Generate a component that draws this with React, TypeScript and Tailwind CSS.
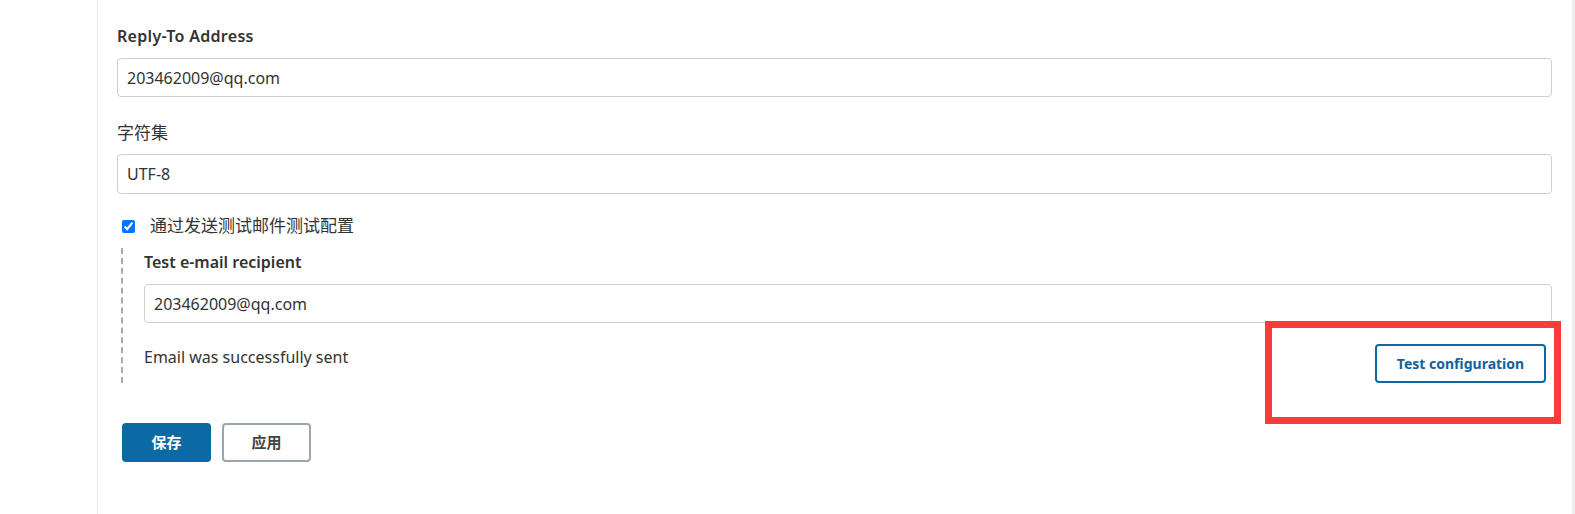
import React from "react";

const font = { fontFamily: '"Noto Sans", "Noto Sans CJK SC", sans-serif' };

export default function App() {
  return (
    <div className="relative flex h-[514px] w-[1575px] bg-white text-[#333]" style={font}>
      <div className="w-[98px] shrink-0 border-r border-[#ebebeb]" />
      <div className="flex-1 pl-[19px] pr-[20px]">
        <div className="mt-[24px] h-[24px] text-[16px] font-semibold leading-[24px] tracking-[0.3px] text-[#333]">Reply-To Address</div>
        <div className="mt-[10px] flex h-[39px] items-center rounded-[4px] border border-[#cfcfcf] pl-[9px] text-[16px] text-[#333]">
          203462009@qq.com
        </div>
        <div className="mt-[24px] h-[24px] text-[17px] leading-[24px] text-[#333]">字符集</div>
        <div className="mt-[9px] flex h-[40px] items-center rounded-[4px] border border-[#cfcfcf] pl-[9px] text-[16px] text-[#333]">
          UTF-8
        </div>
        <div className="mt-[20px] flex h-[24px] items-center">
          <input type="checkbox" checked readOnly className="ml-[5px] h-[13px] w-[13px] accent-[#0075ff]" />
          <span className="ml-[15px] text-[17px] leading-[24px] text-[#333]">通过发送测试邮件测试配置</span>
        </div>
        <div className="ml-[4px] mt-[10px] border-l-2 border-dashed border-[#aaaaaa] pl-[21px]">
          <div className="pt-[2px] h-[26px] text-[16px] font-semibold leading-[24px] text-[#333]">Test e-mail recipient</div>
          <div className="mt-[10px] flex h-[39px] items-center rounded-[4px] border border-[#cfcfcf] pl-[9px] text-[16px] text-[#333]">
            203462009@qq.com
          </div>
          <div className="mt-[21px] flex h-[39px] items-start justify-between pr-[6px]">
            <span className="pt-[1px] text-[16px] leading-[24px] text-[#333]">Email was successfully sent</span>
            <button className="h-[39px] w-[171px] rounded-[4px] border-2 border-[#0f68a3] text-[14px] font-bold text-[#0f62a0]">
              Test configuration
            </button>
          </div>
        </div>
        <div className="ml-[5px] mt-[40px] flex gap-[11px]">
          <button className="h-[39px] w-[89px] rounded-[4px] bg-[#0b69a3] text-[15px] font-bold text-white">保存</button>
          <button className="h-[39px] w-[89px] rounded-[4px] border-2 border-[#9ca6ae] text-[15px] font-bold text-[#444]">应用</button>
        </div>
      </div>
      <div className="w-[3px] shrink-0 bg-[#efefef]" />
      <div className="pointer-events-none absolute left-[1265px] top-[321px] h-[103px] w-[296px] border-[7px] border-[#fb3a3a]" />
    </div>
  );
}
